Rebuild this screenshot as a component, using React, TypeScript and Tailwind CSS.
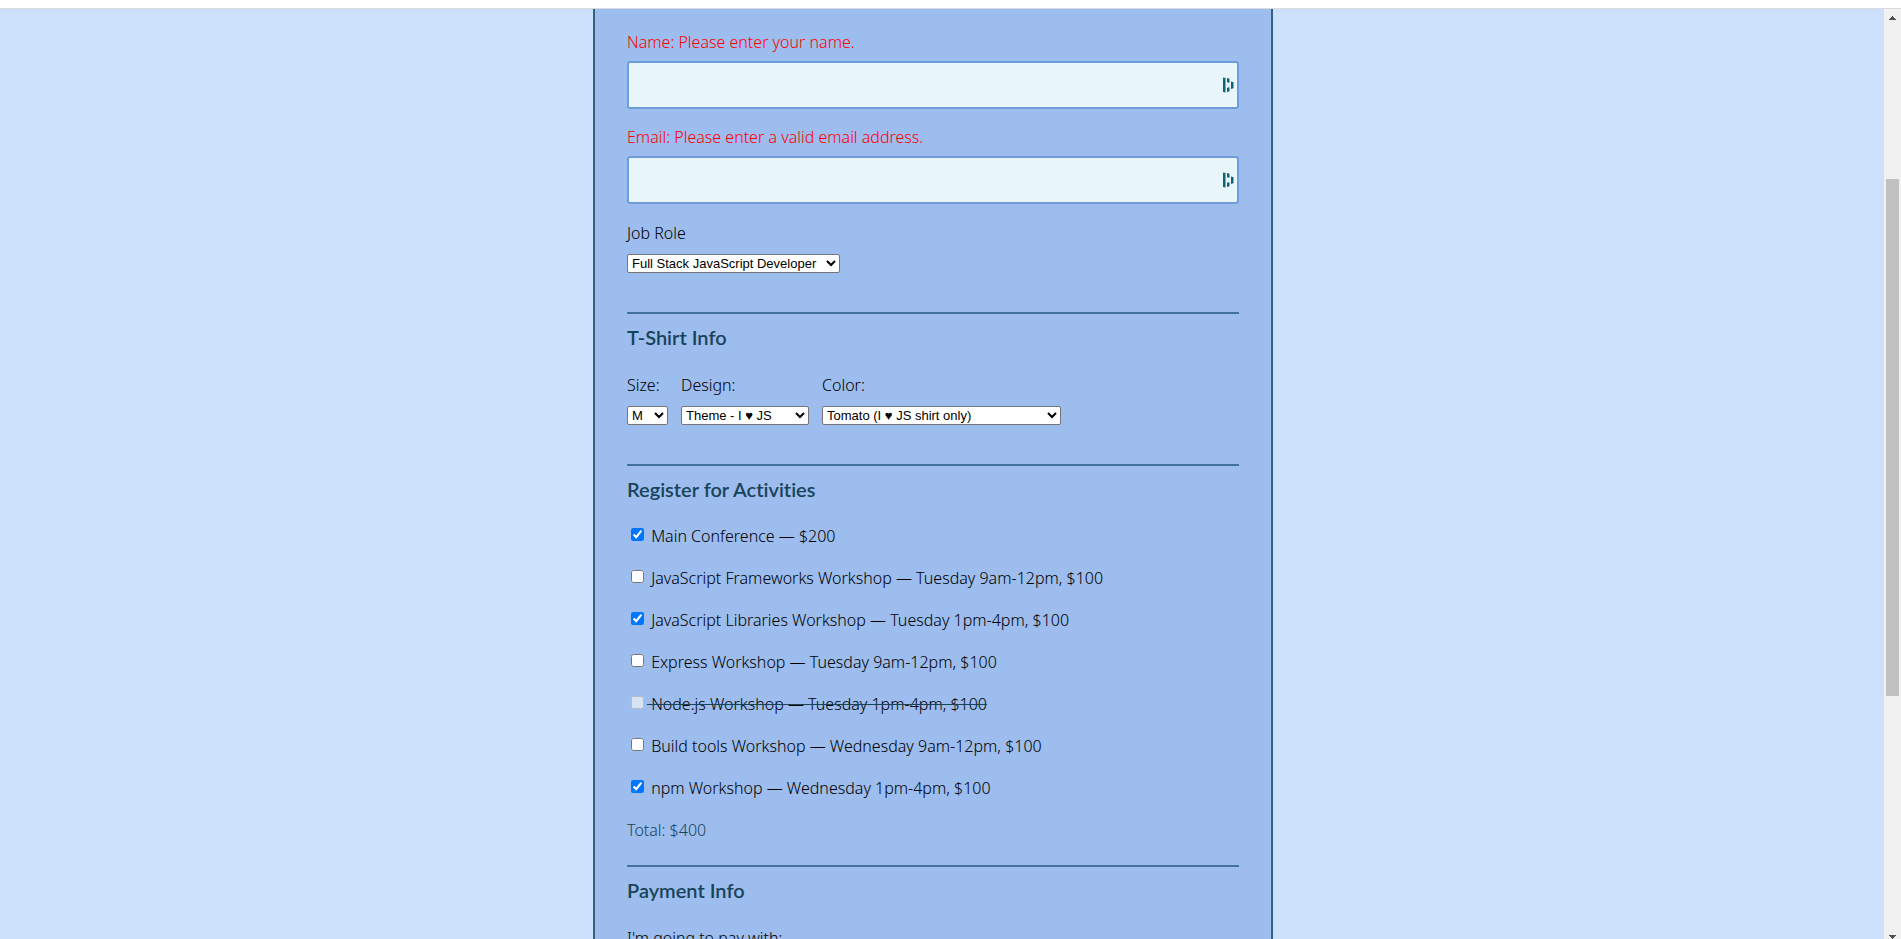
import type { ReactNode } from 'react';

type Activity = { label: string; checked?: boolean; disabled?: boolean };

const activities: Activity[] = [
  { label: 'Main Conference — $200', checked: true },
  { label: 'JavaScript Frameworks Workshop — Tuesday 9am-12pm, $100' },
  { label: 'JavaScript Libraries Workshop — Tuesday 1pm-4pm, $100', checked: true },
  { label: 'Express Workshop — Tuesday 9am-12pm, $100' },
  { label: 'Node.js Workshop — Tuesday 1pm-4pm, $100', disabled: true },
  { label: 'Build tools Workshop — Wednesday 9am-12pm, $100' },
  { label: 'npm Workshop — Wednesday 1pm-4pm, $100', checked: true },
];

function AutofillIcon() {
  return (
    <svg viewBox="0 0 11 16" className="h-4 w-[11px]" fill="#0e6476" aria-hidden="true">
      <path d="M0 0.5 2.5 1V15.5L0 15Z" />
      <path d="M4 1 6.5 1.8V5.8L4 5.2Z" />
      <path d="M4 10.8 6.5 10.2V14.2L4 15Z" />
      <path d="M8 4.4 10.5 5.2V11.2L8 12Z" />
    </svg>
  );
}

function TextField({ id, label, type }: { id: string; label: string; type: string }) {
  return (
    <div className="mb-4">
      <label htmlFor={id} className="mb-[7px] block text-[#ff0000]">{label}</label>
      <div className="relative">
        <input
          id={id}
          type={type}
          className="block h-12 w-full rounded-[3px] border-2 border-[#6f9ddc] bg-[#e8f6fc] px-3 outline-none"
        />
        <span className="pointer-events-none absolute inset-y-0 right-[5px] flex items-center">
          <AutofillIcon />
        </span>
      </div>
    </div>
  );
}

function SelectField({ id, label, value, width }: { id: string; label: string; value: string; width: string }) {
  return (
    <div>
      <label htmlFor={id} className="mb-[9px] block">{label}</label>
      <select
        id={id}
        className={`block h-[19px] rounded-[2px] border border-[#767676] bg-white font-['Liberation_Sans','DejaVu_Sans',sans-serif] text-[13px] text-black ${width}`}
      >
        <option>{value}</option>
      </select>
    </div>
  );
}

function Section({ title, children }: { title: string; children: ReactNode }) {
  return (
    <section className="border-t-2 border-[#427299] pt-[11px]">
      <h2 className="font-['Lato',sans-serif] text-[20px] leading-6 font-semibold text-[#184459] [font-variant-ligatures:none]">
        {title}
      </h2>
      {children}
    </section>
  );
}

function Scrollbar() {
  return (
    <div className="flex w-[17px] shrink-0 flex-col items-center bg-[#f1f1f1]" aria-hidden="true">
      <svg viewBox="0 0 17 17" className="h-[17px] w-[17px]" fill="#505050" shapeRendering="crispEdges">
        <path d="M8 7h1v1h1v1h1v1h1v1H5v-1h1V9h1V8h1z" />
      </svg>
      <div className="mt-[153px] h-[517px] w-[13px] bg-[#c1c1c1]" />
      <div className="grow" />
      <svg viewBox="0 0 17 6" className="h-[6px] w-[17px]" fill="#505050" shapeRendering="crispEdges">
        <path d="M5 2h7v1h-1v1h-1v1H9v1H8V5H7V4H6V3H5z" />
      </svg>
    </div>
  );
}

export default function App() {
  return (
    <div className="flex h-screen flex-col overflow-hidden bg-white font-['Noto_Sans',sans-serif] text-[16px] leading-6 font-light text-black">
      <div className="h-[9px] shrink-0 border-b border-[#d9dadc]" />
      <div className="flex min-h-0 grow">
        <main className="flex min-w-0 grow justify-center overflow-hidden bg-[#ccdffb] pr-[18px]">
          <form className="h-max w-full max-w-[680px] border-x-2 border-[#336184] bg-[#9cbdee] px-8 pt-[21px]">
            <TextField id="name" label="Name: Please enter your name." type="text" />
            <TextField id="email" label="Email: Please enter a valid email address." type="email" />
            <div className="mb-[39px] pt-px">
              <SelectField id="role" label="Job Role" value="Full Stack JavaScript Developer" width="w-[213px]" />
            </div>

            <Section title="T-Shirt Info">
              <div className="mt-6 mb-[39px] flex gap-[13px]">
                <SelectField id="size" label="Size:" value="M" width="w-[41px]" />
                <SelectField id="design" label="Design:" value="Theme - I ♥ JS" width="w-[128px]" />
                <SelectField id="color" label="Color:" value="Tomato (I ♥ JS shirt only)" width="w-[239px]" />
              </div>
            </Section>

            <Section title="Register for Activities">
              <div className="my-[23px] flex flex-col items-start gap-[18px]">
                {activities.map((a) => (
                  <label key={a.label} className="flex items-start">
                    <input
                      type="checkbox"
                      defaultChecked={a.checked}
                      disabled={a.disabled}
                      className="mt-1 mr-[3px] ml-1 h-[13px] w-[13px]"
                    />
                    <span className={a.disabled ? 'whitespace-pre line-through decoration-[#184459]' : 'whitespace-pre'}>
                      {' ' + a.label}
                    </span>
                  </label>
                ))}
                <p className="text-[#184459]">Total: $400</p>
              </div>
            </Section>

            <Section title="Payment Info">
              <div className="mt-6 pb-8">
                <SelectField id="payment" label="I'm going to pay with:" value="Select Payment Method" width="w-[180px]" />
              </div>
            </Section>
          </form>
        </main>
        <Scrollbar />
      </div>
    </div>
  );
}
